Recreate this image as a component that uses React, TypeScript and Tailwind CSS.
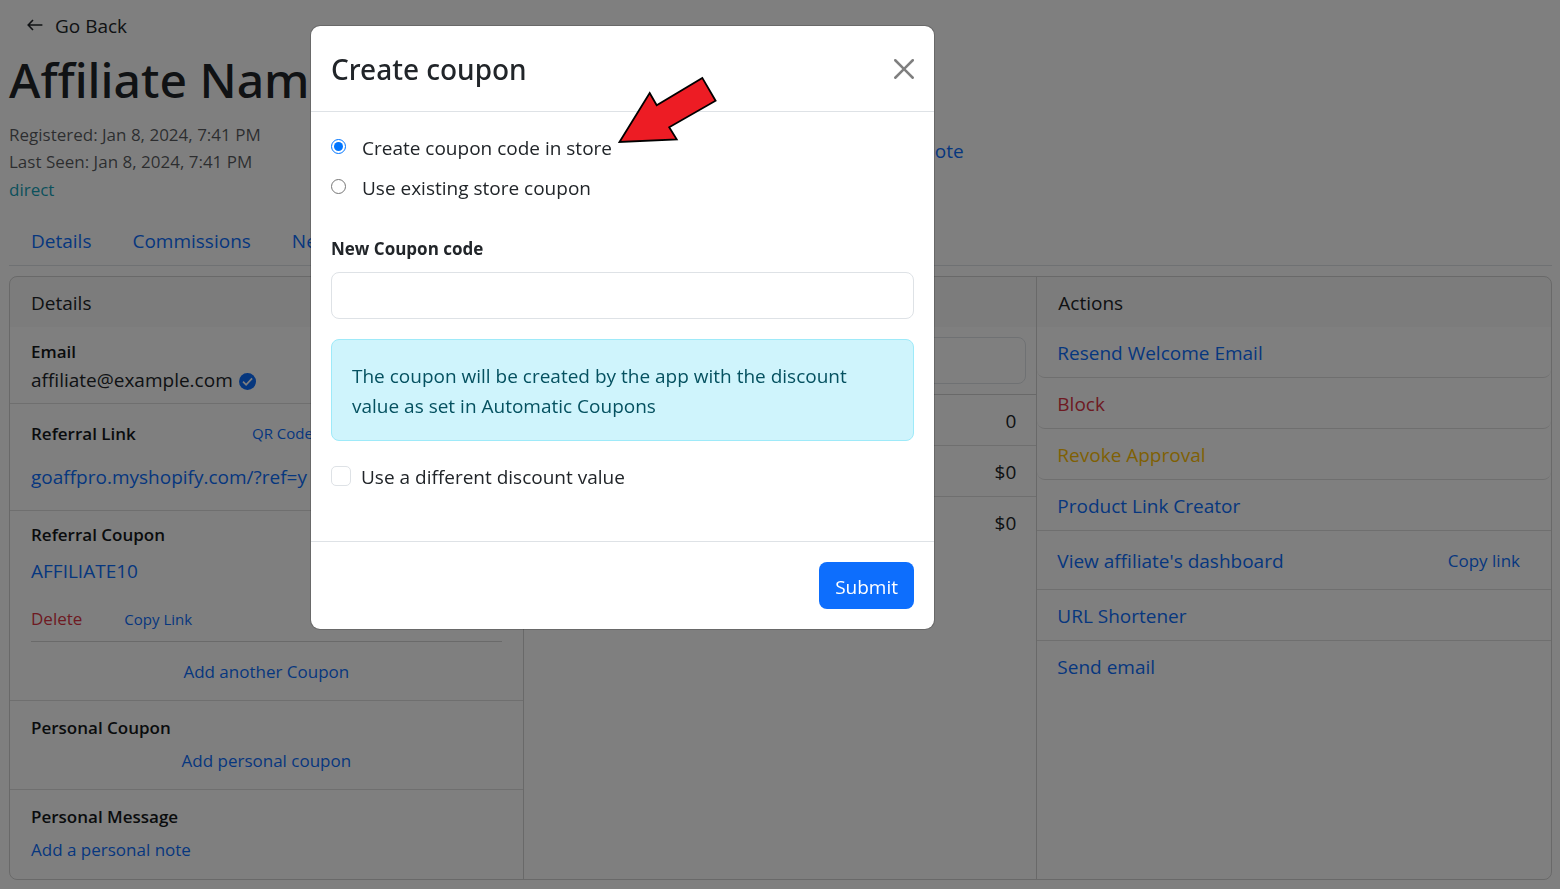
import { useState } from "react";
import type { ReactNode } from "react";

const link = "text-[#0d6efd]";

function Column({ title, last, children }: { title: string; last?: boolean; children: ReactNode }) {
  return (
    <section className={last ? "min-w-0" : "min-w-0 border-r border-black/[0.175]"}>
      <h2 className="h-[50px] bg-[#212529]/[0.03] px-[21px] pt-[11px] leading-[30px]">{title}</h2>
      {children}
    </section>
  );
}

function GoBack() {
  return (
    <a href="#back" className="flex h-[30px] w-fit items-center gap-3 pl-[18px]">
      <svg viewBox="0 0 16 12" className="-mt-[2px] h-3 w-4" fill="none" stroke="currentColor" strokeWidth="1.6">
        <path d="M6 1 1.2 6 6 11M1.4 6H15.4" />
      </svg>
      Go Back
    </a>
  );
}

function Details() {
  return (
    <Column title="Details">
      <div className="h-[77px] border-b border-black/[0.13] px-[21px] pt-[11px]">
        <h3 className="text-[17px] leading-[27px] font-semibold text-[#15181b]">Email</h3>
        <p className="flex items-center gap-[6px] leading-[30px]">
          affiliate@example.com
          <svg viewBox="0 0 16 16" className="mt-[2px] size-[17px]" aria-hidden="true">
            <circle cx="8" cy="8" r="8" fill="#0d6efd" />
            <path d="m3.8 8.2 2.9 2.9 5.6-6" fill="none" stroke="#fff" strokeWidth="1.6" />
          </svg>
        </p>
      </div>
      <div className="h-[107px] border-b border-black/[0.13] px-[21px] pt-4">
        <div className="flex h-[27px] items-center">
          <h3 className="w-[221px] text-[17px] leading-[27px] font-semibold text-[#15181b]">Referral Link</h3>
          <a href="#qr" className={`text-[15px] ${link}`}>QR Code</a>
        </div>
        <a href="#referral" className={`mt-[15px] block leading-[30px] ${link}`}>goaffpro.myshopify.com/?ref=y</a>
      </div>
      <div className="h-[190px] border-b border-black/[0.13] px-[21px] pt-[10px]">
        <h3 className="text-[17px] leading-[27px] font-semibold text-[#15181b]">Referral Coupon</h3>
        <a href="#coupon" className={`mt-[8px] block leading-[30px] ${link}`}>AFFILIATE10</a>
        <div className="mt-[18px] flex h-[30px] items-center gap-[42px]">
          <button className="text-[17px] text-[#dc3545]">Delete</button>
          <a href="#copy" className={`text-[15px] ${link}`}>Copy Link</a>
        </div>
        <hr className="mt-[7px] border-black/[0.17]" />
        <button className={`mx-auto mt-[15px] block text-[17px] leading-[30px] ${link}`}>Add another Coupon</button>
      </div>
      <div className="h-[89px] border-b border-black/[0.13] px-[21px] pt-[13px]">
        <h3 className="text-[17px] leading-[27px] font-semibold text-[#15181b]">Personal Coupon</h3>
        <button className={`mx-auto mt-[5px] block text-[17px] leading-[30px] ${link}`}>Add personal coupon</button>
      </div>
      <div className="h-[89px] px-[21px] pt-[13px]">
        <h3 className="text-[17px] leading-[27px] font-semibold text-[#15181b]">Personal Message</h3>
        <button className={`mt-[5px] block text-[17px] leading-[30px] ${link}`}>Add a personal note</button>
      </div>
    </Column>
  );
}

function Overview() {
  return (
    <Column title="">
      <div className="border-b border-black/[0.175] p-[10px]">
        <input aria-label="Period" className="block h-[47px] w-full rounded-lg border border-[#dee2e6] px-4" />
      </div>
      <ul>
        {["0", "$0", "$0"].map((value, i) => (
          <li key={i} className="h-[51px] border-b border-black/[0.13] px-5 pt-[11px] text-right leading-[30px] last:border-0">
            {value}
          </li>
        ))}
      </ul>
    </Column>
  );
}

function Actions() {
  const rounded = "h-[51px] rounded-b-lg border-b border-black/[0.13] px-5 pt-[11px] leading-[30px]";
  const flat = "h-[51px] border-b border-black/[0.13] px-5 pt-[11px] leading-[30px]";
  return (
    <Column title="Actions" last>
      <ul>
        <li className={rounded}><button className={link}>Resend Welcome Email</button></li>
        <li className={rounded}><button className="text-[#dc3545]">Block</button></li>
        <li className={rounded}><button className="text-[#ffc107]">Revoke Approval</button></li>
        <li className={flat}><button className={link}>Product Link Creator</button></li>
        <li className="flex h-[59px] items-center justify-between border-b border-black/[0.13] pt-[2px] pr-[31px] pl-5">
          <a href="#dashboard" className={link}>View affiliate's dashboard</a>
          <button className={`text-[17px] ${link}`}>Copy link</button>
        </li>
        <li className={flat}><button className={link}>URL Shortener</button></li>
        <li className="h-[51px] px-5 pt-[11px] leading-[30px]"><button className={link}>Send email</button></li>
      </ul>
    </Column>
  );
}

function CouponDialog() {
  const [mode, setMode] = useState("create");
  return (
    <div className="fixed inset-0 bg-black/50 pt-[25px] pl-[310px]">
      <form
        role="dialog"
        aria-labelledby="coupon-title"
        onSubmit={(e) => e.preventDefault()}
        className="relative w-full max-w-[625px] rounded-[10px] border border-black/[0.175] bg-white bg-clip-padding"
      >
        <header className="flex h-[86px] items-center justify-between border-b border-[#dee2e6] px-5">
          <h2 id="coupon-title" className="pt-[2px] font-['Noto_Sans','Open_Sans',sans-serif] text-[28px] leading-[45px] font-medium">Create coupon</h2>
          <button type="button" aria-label="Close" className="text-black/50">
            <svg viewBox="0 0 16 16" className="size-5" fill="currentColor">
              <path d="M.293.293a1 1 0 0 1 1.414 0L8 6.586 14.293.293a1 1 0 1 1 1.414 1.414L9.414 8l6.293 6.293a1 1 0 0 1-1.414 1.414L8 9.414l-6.293 6.293a1 1 0 0 1-1.414-1.414L6.586 8 .293 1.707a1 1 0 0 1 0-1.414z" />
            </svg>
          </button>
        </header>
        <div className="px-5 pt-5 pb-[49px]">
          <div className="flex flex-col gap-[10px] pt-px">
            <label className="flex h-[30px] items-center gap-4">
              <input type="radio" name="mode" className="-mt-1 size-[15px]" checked={mode === "create"} onChange={() => setMode("create")} />
              Create coupon code in store
            </label>
            <label className="flex h-[30px] items-center gap-4">
              <input type="radio" name="mode" className="-mt-1 size-[15px]" checked={mode === "existing"} onChange={() => setMode("existing")} />
              Use existing store coupon
            </label>
          </div>
          <label htmlFor="code" className="mt-[32px] block text-[17px] leading-[27px] font-bold">New Coupon code</label>
          <input id="code" className="mt-[10px] block h-[47px] w-full rounded-lg border border-[#dee2e6] px-4" />
          <p className="mt-5 rounded-lg border border-[#9eeaf9] bg-[#cff4fc] px-5 pt-[21px] pb-[19px] leading-[30px] text-[#055160]">
            The coupon will be created by the app with the discount value as set in Automatic Coupons
          </p>
          <label className="mt-[21px] flex h-[30px] items-center gap-[10px]">
            <input type="checkbox" className="-mt-[2px] size-5 appearance-none rounded-[5px] border border-[#dee2e6] checked:bg-[#0d6efd]" />
            Use a different discount value
          </label>
        </div>
        <footer className="flex justify-end border-t border-[#dee2e6] px-5 py-5">
          <button type="submit" className="h-[47px] rounded-lg bg-[#0d6efd] px-4 pt-[3px] text-white">Submit</button>
        </footer>
        <svg viewBox="617 75 101 70" className="pointer-events-none absolute top-[49px] left-[306px] h-[70px] w-[101px]" aria-hidden="true">
          <path d="M619.5 142 649.7 93l7 12.3 45.6-27.4 13.3 22.8-46.4 26.6 7.5 12z" fill="#ed1c24" stroke="#000" strokeWidth="1.8" />
        </svg>
      </form>
    </div>
  );
}

export default function App() {
  return (
    <main className="min-h-screen bg-white pt-[11px] pr-2 pb-2 pl-[9px] font-['Open_Sans','Noto_Sans',sans-serif] text-[19px] text-[#212529]">
      <GoBack />
      <h1 className="mt-[9px] font-['Noto_Sans','Open_Sans',sans-serif] text-[48px] leading-[60px] font-medium">Affiliate Name</h1>
      <div className="mt-[11px] grid grid-cols-3">
        <div className="text-[17px] leading-[27px] text-[#212529]/75">
          <p>Registered: Jan 8, 2024, 7:41 PM</p>
          <p>Last Seen: Jan 8, 2024, 7:41 PM</p>
          <p className="leading-[30px] text-[#17a2b8]">direct</p>
        </div>
        <button className={`mt-[15px] mr-[74px] h-[30px] justify-self-end ${link}`}>Add note</button>
      </div>
      <nav className="mt-[6px] flex h-[55px] gap-[41px] border-b border-[#dee2e6] pt-[16px] pl-[22px]">
        <a href="#details" className={link}>Details</a>
        <a href="#commissions" className={link}>Commissions</a>
        <a href="#network" className={link}>Network</a>
      </nav>
      <div className="mt-[10px] grid grid-cols-3 overflow-hidden rounded-lg border border-black/[0.175]">
        <Details />
        <Overview />
        <Actions />
      </div>
      <CouponDialog />
    </main>
  );
}
